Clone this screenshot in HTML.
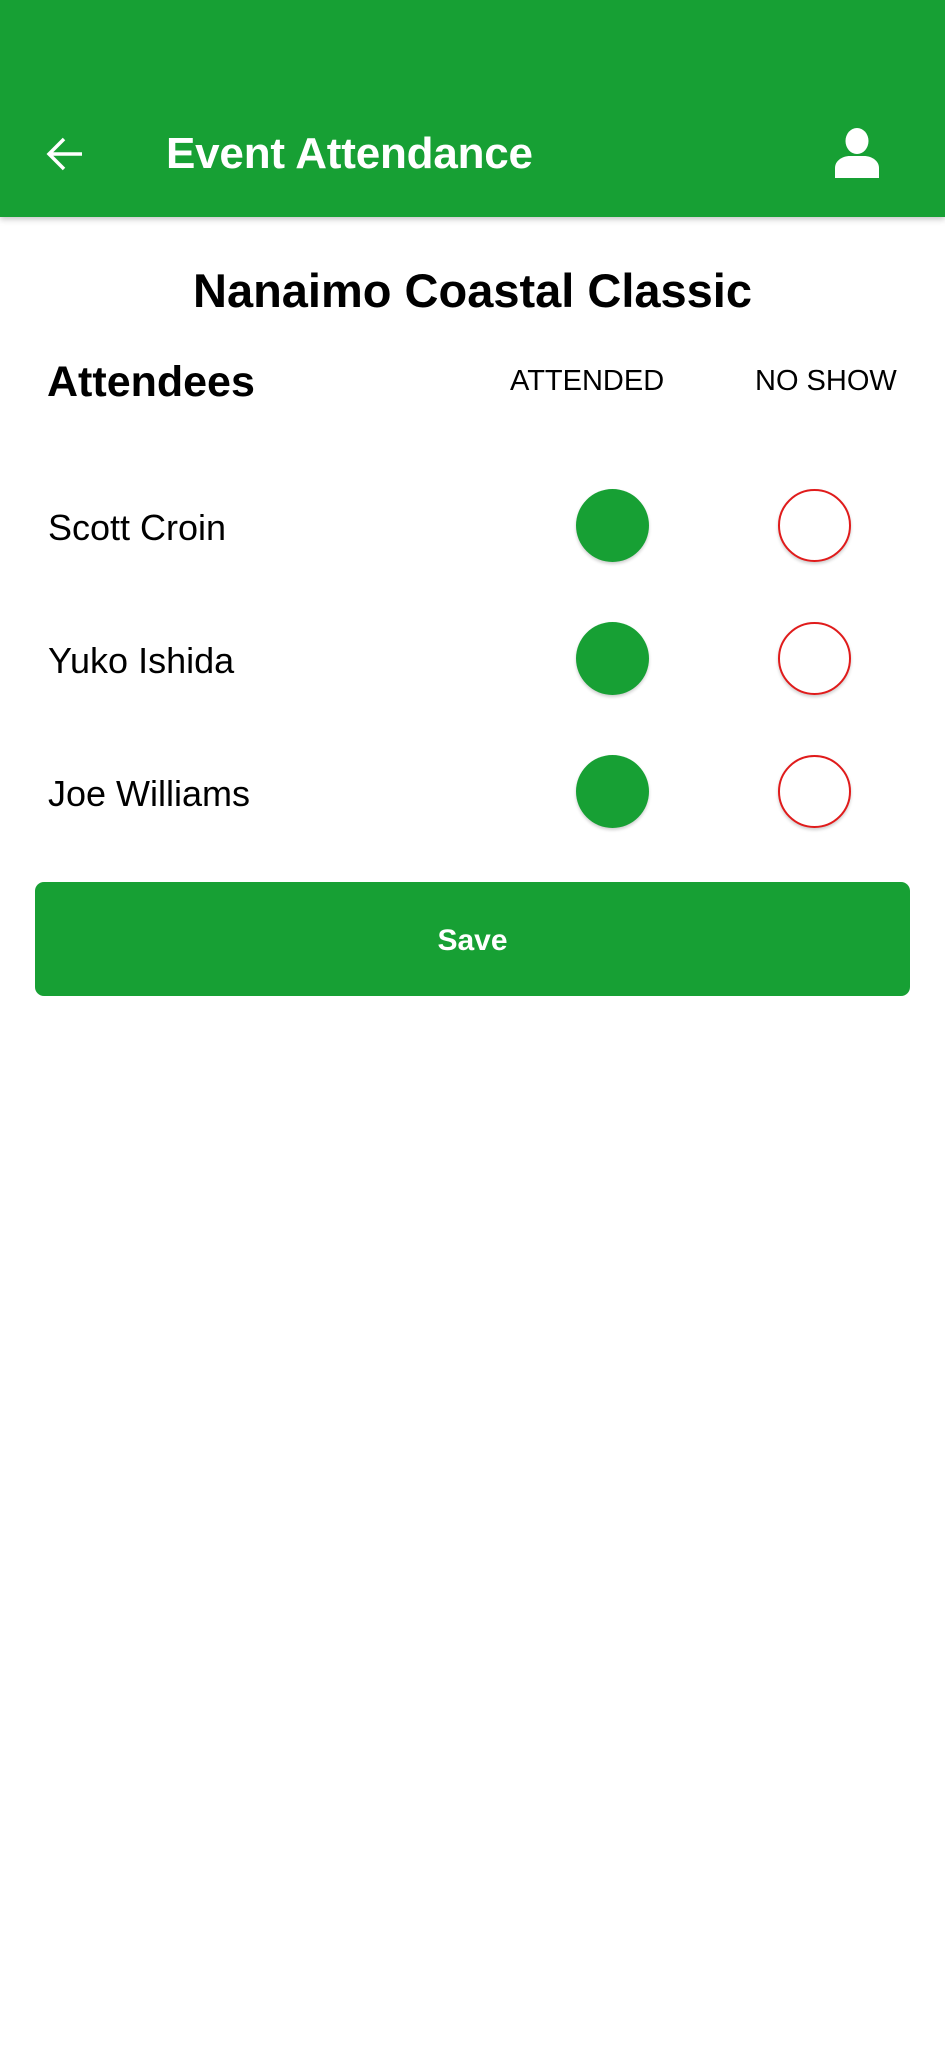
<!DOCTYPE html>
<html><head><meta charset="utf-8"><style>
html,body{margin:0;padding:0;width:945px;height:2048px;background:#fff;overflow:hidden;font-family:"Liberation Sans",Arial,sans-serif;}
.hdr{position:absolute;left:0;top:0;width:945px;height:217px;background:#17a034;box-shadow:0 2px 6px rgba(0,0,0,0.25);}
.title{position:absolute;left:166px;top:130px;font-size:44px;font-weight:bold;color:#fff;line-height:48px;letter-spacing:-0.2px;}
.ev{position:absolute;left:0;width:945px;text-align:center;top:263px;font-size:47px;font-weight:bold;line-height:56px;color:#000;}
.att{position:absolute;left:47px;top:356px;font-size:43px;font-weight:bold;line-height:52px;color:#000;}
.col{position:absolute;top:363px;font-size:29px;line-height:36px;color:#000;}
.name{position:absolute;left:48px;font-size:36px;line-height:40px;color:#000;}
.c{position:absolute;width:73px;height:73px;border-radius:50%;box-sizing:border-box;box-shadow:0 2px 3px rgba(0,0,0,0.2);}
.g{background:#17a034;left:576px;}
.r{background:#fff;border:2px solid #e01b1b;left:778px;}
.save{position:absolute;left:35px;top:882px;width:875px;height:114px;background:#17a034;border-radius:9px;color:#fff;font-size:30px;font-weight:bold;text-align:center;line-height:118px;}
</style></head><body>
<div class="hdr">
<svg style="position:absolute;left:44px;top:134px" width="40" height="40" viewBox="0 0 40 40"><path d="M38 20H5M20 5L5 20L20 35" stroke="#fff" stroke-width="3.5" fill="none"/></svg>
<div class="title">Event Attendance</div>
<svg style="position:absolute;left:834px;top:128px" width="46" height="50" viewBox="0 0 46 50"><ellipse cx="23" cy="13" rx="11.5" ry="13" fill="#fff"/><path d="M1 50V40C1 33 8 28 16 28H30C38 28 45 33 45 40V50Z" fill="#fff"/></svg>
</div>
<div class="ev">Nanaimo Coastal Classic</div>
<div class="att">Attendees</div>
<div class="col" style="left:510px">ATTENDED</div>
<div class="col" style="left:755px">NO SHOW</div>
<div class="name" style="top:508px">Scott Croin</div>
<div class="name" style="top:641px">Yuko Ishida</div>
<div class="name" style="top:774px">Joe Williams</div>
<div class="c g" style="top:489px"></div><div class="c r" style="top:489px"></div>
<div class="c g" style="top:622px"></div><div class="c r" style="top:622px"></div>
<div class="c g" style="top:755px"></div><div class="c r" style="top:755px"></div>
<div class="save">Save</div>
</body></html>
